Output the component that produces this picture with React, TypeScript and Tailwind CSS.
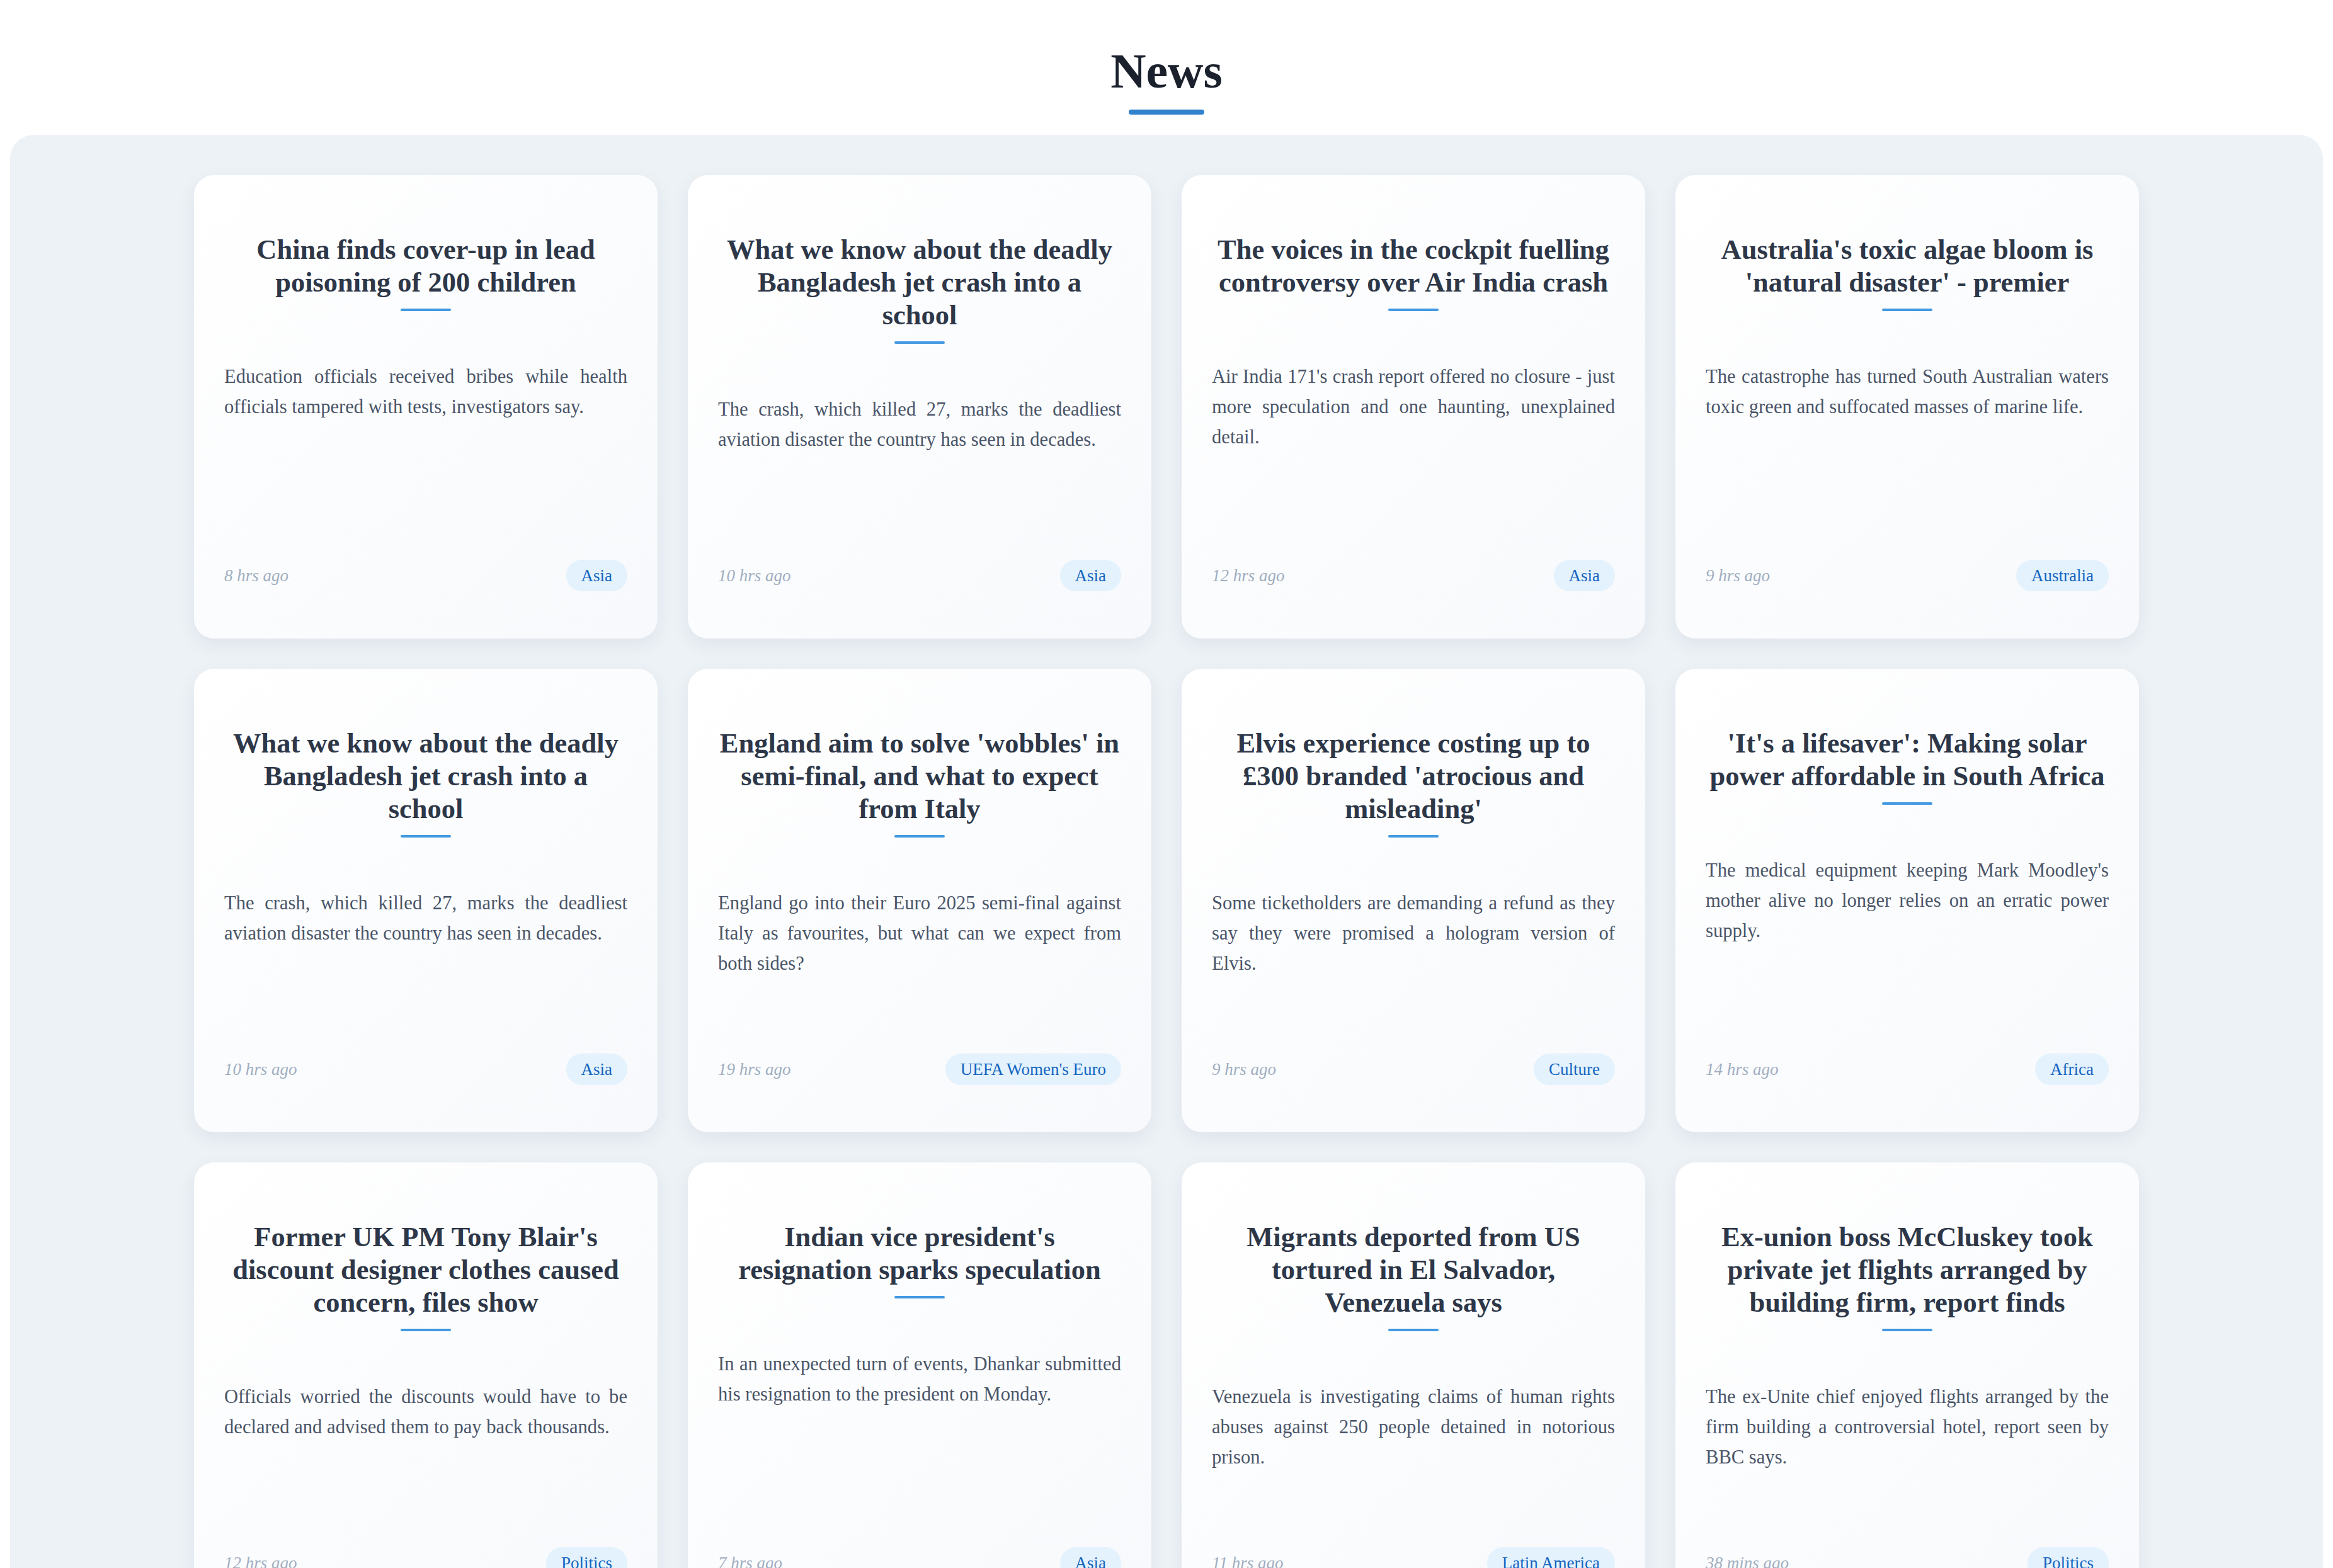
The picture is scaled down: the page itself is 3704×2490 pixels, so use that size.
import React from "react";

type Item = { title: string; body: string; time: string; tag: string };

const items: Item[] = [
  {
    title: "China finds cover-up in lead poisoning of 200 children",
    body: "Education officials received bribes while health officials tampered with tests, investigators say.",
    time: "8 hrs ago",
    tag: "Asia",
  },
  {
    title: "What we know about the deadly Bangladesh jet crash into a school",
    body: "The crash, which killed 27, marks the deadliest aviation disaster the country has seen in decades.",
    time: "10 hrs ago",
    tag: "Asia",
  },
  {
    title: "The voices in the cockpit fuelling controversy over Air India crash",
    body: "Air India 171's crash report offered no closure - just more speculation and one haunting, unexplained detail.",
    time: "12 hrs ago",
    tag: "Asia",
  },
  {
    title: "Australia's toxic algae bloom is 'natural disaster' - premier",
    body: "The catastrophe has turned South Australian waters toxic green and suffocated masses of marine life.",
    time: "9 hrs ago",
    tag: "Australia",
  },
  {
    title: "What we know about the deadly Bangladesh jet crash into a school",
    body: "The crash, which killed 27, marks the deadliest aviation disaster the country has seen in decades.",
    time: "10 hrs ago",
    tag: "Asia",
  },
  {
    title: "England aim to solve 'wobbles' in semi-final, and what to expect from Italy",
    body: "England go into their Euro 2025 semi-final against Italy as favourites, but what can we expect from both sides?",
    time: "19 hrs ago",
    tag: "UEFA Women's Euro",
  },
  {
    title: "Elvis experience costing up to £300 branded 'atrocious and misleading'",
    body: "Some ticketholders are demanding a refund as they say they were promised a hologram version of Elvis.",
    time: "9 hrs ago",
    tag: "Culture",
  },
  {
    title: "'It's a lifesaver': Making solar power affordable in South Africa",
    body: "The medical equipment keeping Mark Moodley's mother alive no longer relies on an erratic power supply.",
    time: "14 hrs ago",
    tag: "Africa",
  },
  {
    title: "Former UK PM Tony Blair's discount designer clothes caused concern, files show",
    body: "Officials worried the discounts would have to be declared and advised them to pay back thousands.",
    time: "12 hrs ago",
    tag: "Politics",
  },
  {
    title: "Indian vice president's resignation sparks speculation",
    body: "In an unexpected turn of events, Dhankar submitted his resignation to the president on Monday.",
    time: "7 hrs ago",
    tag: "Asia",
  },
  {
    title: "Migrants deported from US tortured in El Salvador, Venezuela says",
    body: "Venezuela is investigating claims of human rights abuses against 250 people detained in notorious prison.",
    time: "11 hrs ago",
    tag: "Latin America",
  },
  {
    title: "Ex-union boss McCluskey took private jet flights arranged by building firm, report finds",
    body: "The ex-Unite chief enjoyed flights arranged by the firm building a controversial hotel, report seen by BBC says.",
    time: "38 mins ago",
    tag: "Politics",
  },
];

function Card({ item }: { item: Item }) {
  return (
    <div className="flex h-[736px] w-[736px] flex-col rounded-[32px] bg-linear-to-br from-white to-[#f7f9fc] px-12 pt-[92px] pb-[75px] shadow-[0_10px_30px_rgba(30,41,59,0.07)]">
      <h2 className="text-center text-[44.5px] leading-[52px] font-bold text-[#2d3748]">
        {item.title}
      </h2>
      <div className="mx-auto mt-4 h-1 w-20 rounded-full bg-[#4299e1]" />
      <p className="mt-20 text-justify text-[30.6px] leading-[48px] text-[#4a5568]">
        {item.body}
      </p>
      <div className="mt-auto flex items-center justify-between">
        <span className="text-[27px] leading-[32px] italic text-[#a0aec0]">
          {item.time}
        </span>
        <span className="rounded-full bg-[#e3f2fd] px-6 py-[9px] text-[27px] leading-[32px] text-[#1565c0]">
          {item.tag}
        </span>
      </div>
    </div>
  );
}

export default function App() {
  return (
    <div className="min-h-screen bg-white font-['Liberation_Serif',serif]">
      <header className="flex flex-col items-center pt-[66px]">
        <h1 className="text-[78px] leading-[94px] font-bold text-[#1a202c]">News</h1>
        <div className="mt-[14px] h-2 w-[120px] rounded-full bg-[#3182ce]" />
      </header>
      <main className="mx-4 mt-8 rounded-[38px] bg-[#edf2f7] pt-16 pb-16">
        <div className="grid grid-cols-[repeat(4,736px)] justify-center gap-12">
          {items.map((item, i) => (
            <Card key={i} item={item} />
          ))}
        </div>
      </main>
    </div>
  );
}
